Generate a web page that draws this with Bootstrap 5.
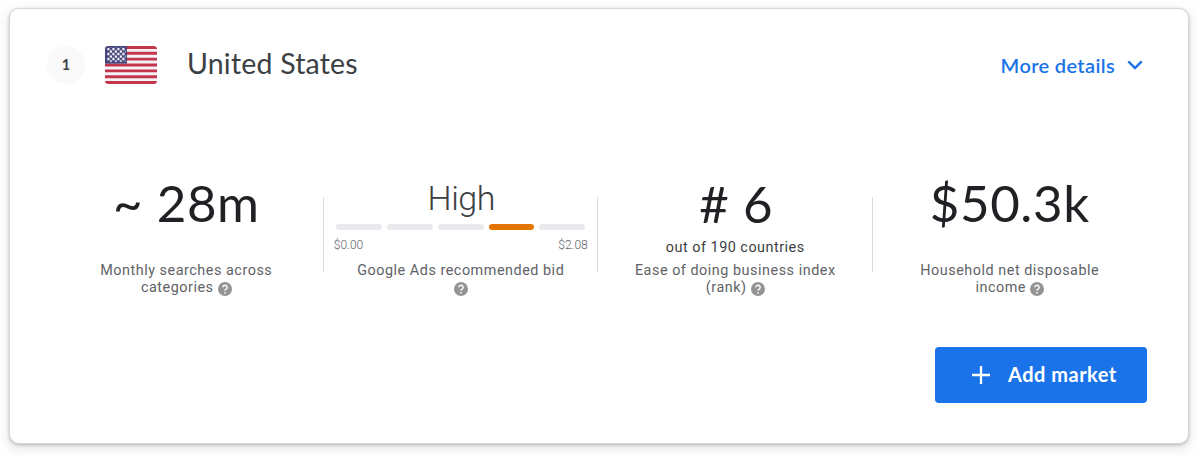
<!DOCTYPE html>
<html lang="en">
<head>
<meta charset="utf-8">
<meta name="viewport" content="width=device-width, initial-scale=1">
<title>United States</title>
<link href="https://cdn.jsdelivr.net/npm/bootstrap@5.3.0/dist/css/bootstrap.min.css" rel="stylesheet">
<style>
body { font-family: Roboto, "Liberation Sans", sans-serif; background: #fefefe; color: #202124; padding: 8px 0 12px 9px; }
.market { width: 1180px; height: 436px; padding: 28px 41px 40px 37px; border: 1px solid #d5d7da; border-radius: 10px; box-shadow: 0 1px 3px rgba(60,64,67,.3), 0 4px 8px 2px rgba(60,64,67,.1); }
.brand { font-family: Lato, "Open Sans", sans-serif; }
.market-head { height: 56px; }
.rank { width: 38px; height: 38px; background: #f9f9fa; color: #3c4043; font: 700 14.5px Lato, sans-serif; }
.flag { margin-left: 20px; }
.country { margin: -3px 0 0 30px; font-size: 28.5px; line-height: 36px; letter-spacing: .2px; color: #3c4043; }
.more { font-size: 20px; line-height: 24px; font-weight: 600; letter-spacing: .35px; color: #1a73e8; margin: 1px 4px 0 0; }
.metrics { margin: 76px 0 0 1px; width: 1098px; }
.metric { width: 274.5px; height: 131px; padding-left: 2px; }
.metric + .metric { background: linear-gradient(#dadce0, #dadce0) 0 29px / 1px 75px no-repeat; }
.value-box { height: 94px; }
.figure-text { font-size: 51px; line-height: 70px; letter-spacing: .6px; color: #202124; white-space: pre; }
.figure-rank { height: 71px; padding: 1px 0 0 2px; }
.level { font-size: 34px; line-height: 40px; font-weight: 300; letter-spacing: -.5px; color: #3c4043; padding: 10px 0 0 1px; }
.segments { width: 249px; height: 6px; gap: 5px; margin-top: 6px; }
.segments span { flex: 1; border-radius: 3px; background: #e8eaed; }
.segments .on { background: #e37400; }
.range { width: 254px; font-size: 12px; line-height: 14px; font-weight: 300; color: #5f6368; margin-top: 8px; }
.note { font-size: 14.4px; line-height: 17px; letter-spacing: .5px; color: #3c4043; }
.caption-text { font-size: 14.4px; line-height: 17px; letter-spacing: .52px; color: #5f6368; }
.help { width: 14px; height: 14px; vertical-align: -4px; }
.add { width: 212px; height: 56px; background: #1a73e8; border-radius: 4px; color: #fff; font-size: 20px; letter-spacing: .5px; font-weight: 700; margin-top: 48px; padding: 0; }
.add:hover { background: #1967d2; color: #fff; }
.add-label { margin-top: -2px; }
</style>
</head>
<body>
<svg class="d-none">
  <symbol id="help" viewBox="0 0 14 14"><circle cx="7" cy="7" r="7" fill="#949494"/><path d="M4.8 5.3a2.2 2 0 1 1 3.5 1.6C7.5 7.5 7 7.8 7 8.8" fill="none" stroke="#fff" stroke-width="1.4"/><circle cx="7" cy="10.8" r=".85" fill="#fff"/></symbol>
</svg>
<main class="market card">
  <header class="market-head d-flex align-items-center">
    <span class="rank rounded-circle d-flex align-items-center justify-content-center">1</span>
    <svg class="flag" width="52" height="38" viewBox="0 0 52 38">
      <defs>
        <clipPath id="flagClip"><rect width="52" height="38" rx="3.5"/></clipPath>
        <pattern id="stars" width="5" height="5" patternUnits="userSpaceOnUse" x="2" y="1.7"><circle cx="1.4" cy="1.3" r="1.2" fill="#fff"/><circle cx="3.9" cy="3.8" r="1.2" fill="#fff"/></pattern>
      </defs>
      <g clip-path="url(#flagClip)">
        <rect width="52" height="38" fill="#f5f2f5"/>
        <path d="M0 1.46h52M0 7.31h52M0 13.15h52M0 19h52M0 24.85h52M0 30.69h52M0 36.54h52" stroke="#c2354d" stroke-width="2.92"/>
        <rect width="22" height="17.6" fill="#46467f"/>
        <rect x="2" y="1.7" width="18.5" height="14" fill="url(#stars)"/>
      </g>
    </svg>
    <h2 class="country brand fw-normal">United States</h2>
    <a class="more brand d-flex align-items-center text-decoration-none ms-auto" href="#"><span>More details</span>
      <svg class="ms-2 ps-1" width="20" height="12" viewBox="0 0 16 12"><path d="M1.3 2.4 8 9.1l6.7-6.7" fill="none" stroke="#1a73e8" stroke-width="2.4"/></svg>
    </a>
  </header>
  <section class="metrics d-flex text-center">
    <div class="metric">
      <div class="value-box"><div class="figure-text brand">~ 28m</div></div>
      <div class="caption-text">Monthly searches across<br>categories <svg class="help"><use href="#help"/></svg></div>
    </div>
    <div class="metric">
      <div class="value-box d-flex flex-column align-items-center">
        <div class="level">High</div>
        <div class="segments d-flex"><span></span><span></span><span></span><span class="on"></span><span></span></div>
        <div class="range d-flex justify-content-between"><span>$0.00</span><span>$2.08</span></div>
      </div>
      <div class="caption-text">Google Ads recommended bid<br><svg class="help"><use href="#help"/></svg></div>
    </div>
    <div class="metric">
      <div class="value-box"><div class="figure-text figure-rank brand"># 6</div><div class="note">out of 190 countries</div></div>
      <div class="caption-text">Ease of doing business index<br>(rank) <svg class="help"><use href="#help"/></svg></div>
    </div>
    <div class="metric">
      <div class="value-box"><div class="figure-text brand">$50.3k</div></div>
      <div class="caption-text">Household net disposable<br>income <svg class="help"><use href="#help"/></svg></div>
    </div>
  </section>
  <button class="add brand btn d-flex align-items-center align-self-end" type="button">
    <svg class="ms-4 me-3" width="32" height="18" viewBox="-12 0 32 18"><path d="M9 0v18M0 9h18" stroke="#fff" stroke-width="2.3"/></svg><span class="add-label">Add market</span>
  </button>
</main>
<script src="https://cdn.jsdelivr.net/npm/bootstrap@5.3.0/dist/js/bootstrap.bundle.min.js"></script>
</body>
</html>
